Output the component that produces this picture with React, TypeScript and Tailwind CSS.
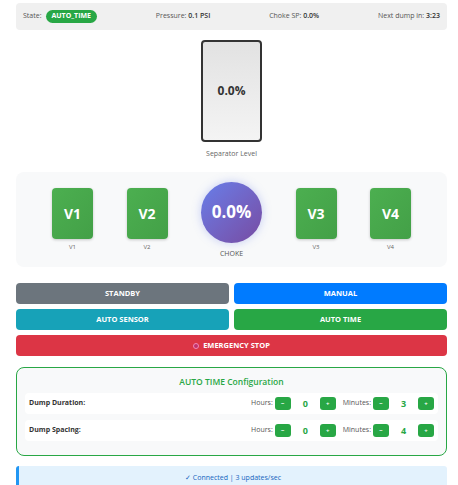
import React from 'react';

const valves = ['V1', 'V2'];
const valvesRight = ['V3', 'V4'];

function Valve({ name }: { name: string }) {
  return (
    <div className="flex flex-col items-center">
      <div className="flex h-[51px] w-[41px] items-center justify-center rounded-[4px] bg-gradient-to-br from-[#4caf50] to-[#43a047] shadow-[0_1px_3px_rgba(0,0,0,0.2)]">
        <span className="text-[14px] font-bold text-white">{name}</span>
      </div>
      <span className="mt-[4px] text-[6px] leading-[8px] text-[#666]">{name}</span>
    </div>
  );
}

function StepButton({ label }: { label: string }) {
  return (
    <button className="flex h-[13px] w-[16px] items-center justify-center rounded-[3px] bg-[#28a745] text-[6px] font-bold leading-none text-white">
      {label}
    </button>
  );
}

function TimeRow({ label, hours, minutes }: { label: string; hours: number; minutes: number }) {
  return (
    <div className="flex h-[21px] items-center justify-between rounded-[4px] bg-white pl-[4px] pr-[4px]">
      <span className="text-[7px] font-bold text-[#333]">{label}</span>
      <div className="flex items-center">
        <span className="mr-[2px] text-[7px] text-[#555]">Hours:</span>
        <StepButton label="−" />
        <span className="w-[29px] text-center text-[9px] font-bold text-[#28a745]">{hours}</span>
        <StepButton label="+" />
        <span className="ml-[7px] mr-[2px] text-[7px] text-[#555]">Minutes:</span>
        <StepButton label="−" />
        <span className="w-[29px] text-center text-[9px] font-bold text-[#28a745]">{minutes}</span>
        <StepButton label="+" />
      </div>
    </div>
  );
}

export default function App() {
  return (
    <div className="min-h-[485px] bg-white pl-[16px] pr-[11px] pt-[3px] font-['Open_Sans','Noto_Sans',sans-serif]">
      {/* Status bar */}
      <div className="flex h-[27px] items-center justify-between rounded-[4px] bg-[#f0f0f0] px-[7px] text-[7px] text-[#555]">
        <div className="flex items-center gap-[4px]">
          <span>State:</span>
          <span className="rounded-full bg-[#28a745] px-[6px] py-[1px] text-[7px] font-bold text-white">AUTO_TIME</span>
        </div>
        <div>
          Pressure: <span className="font-semibold text-[#333]">0.1 PSI</span>
        </div>
        <div>
          Choke SP: <span className="font-semibold text-[#333]">0.0%</span>
        </div>
        <div>
          Next dump in: <span className="font-semibold text-[#333]">3:23</span>
        </div>
      </div>

      {/* Separator */}
      <div className="mt-[10px] flex flex-col items-center">
        <div className="flex h-[102px] w-[61px] items-center justify-center rounded-[4px] border-2 border-[#333] bg-gradient-to-b from-[#e2e2e2] to-[#f4f4f4]">
          <span className="text-[12px] font-bold text-[#333]">0.0%</span>
        </div>
        <span className="mt-[7px] text-[7px] leading-[9px] text-[#666]">Separator Level</span>
      </div>

      {/* Valves */}
      <div className="mt-[14px] flex h-[95px] items-center justify-center gap-[33.5px] rounded-[8px] bg-[#f8f9fa]">
        {valves.map((v) => (
          <Valve key={v} name={v} />
        ))}
        <div className="flex flex-col items-center">
          <div className="flex h-[61px] w-[61px] items-center justify-center rounded-full bg-gradient-to-br from-[#667eea] to-[#764ba2] shadow-[0_0_10px_rgba(102,126,234,0.35)]">
            <span className="text-[17px] font-bold text-white">0.0%</span>
          </div>
          <span className="mt-[6px] text-[7px] leading-[9px] text-[#555]">CHOKE</span>
        </div>
        {valvesRight.map((v) => (
          <Valve key={v} name={v} />
        ))}
      </div>

      {/* Mode buttons */}
      <div className="mt-[16px] grid grid-cols-2 gap-x-[5px] gap-y-[5px]">
        <button className="h-[21px] rounded-[4px] bg-[#6c757d] text-[7.5px] font-bold text-white">STANDBY</button>
        <button className="h-[21px] rounded-[4px] bg-[#007bff] text-[7.5px] font-bold text-white">MANUAL</button>
        <button className="h-[21px] rounded-[4px] bg-[#17a2b8] text-[7.5px] font-bold text-white">AUTO SENSOR</button>
        <button className="h-[21px] rounded-[4px] bg-[#28a745] text-[7.5px] font-bold text-white">AUTO TIME</button>
        <button className="col-span-2 flex h-[21px] items-center justify-center gap-[4px] rounded-[4px] bg-[#dc3545] text-[7.5px] font-bold text-white">
          <span className="inline-block h-[6px] w-[6px] rounded-full border border-[#f08ab8] bg-[#c2306a]" />
          EMERGENCY STOP
        </button>
      </div>

      {/* Config */}
      <div className="mt-[11px] rounded-[8px] border-[1.5px] border-[#28a745] bg-[#f8f9fa] px-[8px] pb-[14px] pt-[8px]">
        <div className="text-center text-[8.5px] font-semibold leading-[12px] text-[#28a745]">AUTO TIME Configuration</div>
        <div className="mt-[5px] flex flex-col gap-[6px]">
          <TimeRow label="Dump Duration:" hours={0} minutes={3} />
          <TimeRow label="Dump Spacing:" hours={0} minutes={4} />
        </div>
      </div>

      {/* Connection */}
      <div className="mt-[10px] flex h-[24px] items-center justify-center rounded-[3px] border-l-[3px] border-[#2196f3] bg-[#e3f2fd] text-[7px] text-[#1565c0]">
        ✓ Connected | 3 updates/sec
      </div>
    </div>
  );
}
